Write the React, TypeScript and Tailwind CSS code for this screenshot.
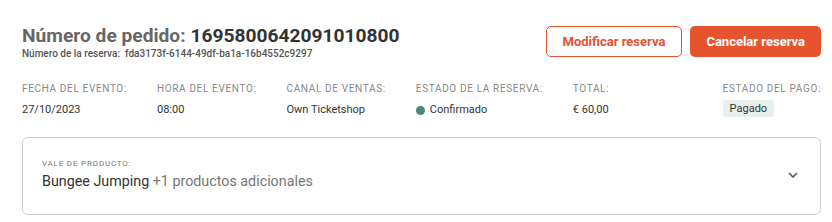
import React from "react";

const cols = [
  { label: "Fecha del evento:", value: "27/10/2023" },
  { label: "Hora del evento:", value: "08:00" },
  { label: "Canal de ventas:", value: "Own Ticketshop" },
];

export default function App() {
  return (
    <div className="w-[832px] h-[222px] bg-white font-['Roboto',sans-serif] pl-[22px] pr-[11px] pt-[24px]">
      {/* header */}
      <div className="flex items-start justify-between">
        <div>
          <h1 className="text-[19.2px] leading-[24px] font-bold text-[#666]">
            Número de pedido: <span className="text-[#333]">1695800642091010800</span>
          </h1>
          <p className="text-[10px] leading-[12px] font-medium text-[#555]">
            Número de la reserva:&nbsp; fda3173f-6144-49df-ba1a-16b4552c9297
          </p>
        </div>
        <div className="flex gap-[8px] mt-[2px]">
          <button className="h-[31px] px-[16px] rounded-[5px] border border-[#e5532f] text-[#e5532f] text-[13px] font-bold bg-white">
            Modificar reserva
          </button>
          <button className="h-[31px] px-[16px] rounded-[5px] bg-[#e5532f] text-white text-[13px] font-bold">
            Cancelar reserva
          </button>
        </div>
      </div>

      {/* info row */}
      <div className="flex gap-[30px] mt-[23px]">
        {cols.map((c) => (
          <div key={c.label}>
            <div className="text-[10px] leading-[12px] uppercase tracking-[0.065em] text-[#888]">{c.label}</div>
            <div className="text-[11px] leading-[14px] text-[#333] mt-[8px]">{c.value}</div>
          </div>
        ))}
        <div>
          <div className="text-[10px] leading-[12px] uppercase tracking-[0.065em] text-[#888]">Estado de la reserva:</div>
          <div className="flex items-center gap-[5px] text-[11px] leading-[14px] text-[#333] mt-[8px]">
            <span className="w-[9px] h-[9px] rounded-full bg-[#4a8a7c]" />
            Confirmado
          </div>
        </div>
        <div>
          <div className="text-[10px] leading-[12px] uppercase tracking-[0.065em] text-[#888]">Total:</div>
          <div className="text-[11px] leading-[14px] text-[#333] mt-[8px]">€ 60,00</div>
        </div>
        <div className="ml-auto">
          <div className="text-[10px] leading-[12px] uppercase tracking-[0.065em] text-[#888]">Estado del pago:</div>
          <div className="mt-[5px] inline-block rounded-[3px] bg-[#e6f1ee] px-[7px] py-[2px] text-[11px] leading-[13px] text-[#333]">
            Pagado
          </div>
        </div>
      </div>

      {/* product card */}
      <div className="mt-[18px] h-[78px] rounded-[6px] border border-[#cfcfcf] flex items-center justify-between pl-[19px] pr-[22px]">
        <div className="mt-[-3px]">
          <div className="text-[8px] leading-[10px] uppercase tracking-[0.1em] text-[#777]">Vale de producto:</div>
          <div className="text-[14.3px] leading-[18px] mt-[3px] text-[#333]">
            Bungee Jumping <span className="text-[#777]">+1 productos adicionales</span>
          </div>
        </div>
        <svg width="10" height="6" viewBox="0 0 10 6" className="mt-[-2px]">
          <path d="M1 1l4 4 4-4" fill="none" stroke="#555" strokeWidth="1.6" />
        </svg>
      </div>
    </div>
  );
}
